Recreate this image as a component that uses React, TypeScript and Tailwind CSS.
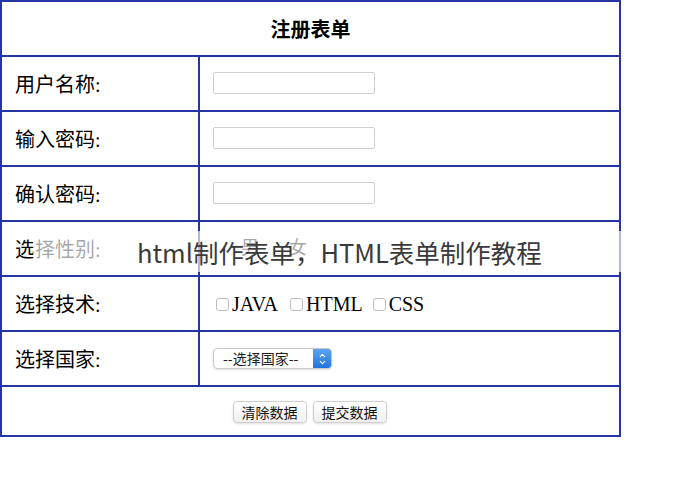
import { ChevronUp, ChevronDown } from "lucide-react";

const line = "border-[#2535a6]";
const cjk = { fontFamily: '"Liberation Serif", "Noto Sans CJK SC", serif' };

function Row({ label, children }: { label: string; children?: React.ReactNode }) {
    return (
        <div className={`flex h-[55px] border-b-2 ${line}`}>
            <div className={`w-[198px] shrink-0 border-r-2 ${line} flex items-center pl-[13px] pt-[2px] text-[20px] text-black`}>
                {label}
            </div>
            <div className="flex items-center pl-[13px]">{children}</div>
        </div>
    );
}

function TextBox() {
    return <input className="w-[162px] h-[22px] border border-[#cfcfcf] rounded-[2px] bg-white outline-none -mt-[2px]" />;
}

function Box() {
    return <span className="inline-block w-[13px] h-[13px] border border-[#bdbdbd] rounded-[3px] bg-white mr-[3px]" />;
}

export default function App() {
    return (
        <div className="w-[678px] h-[490px] bg-white relative" style={cjk}>
            <div className={`w-[621px] border-2 ${line} border-b-0`}>
                <div className={`h-[55px] border-b-2 ${line} flex items-center justify-center text-[20px] font-bold pt-[2px]`}>
                    注册表单
                </div>
                <Row label="用户名称:"><TextBox /></Row>
                <Row label="输入密码:"><TextBox /></Row>
                <Row label="确认密码:"><TextBox /></Row>
                <Row label="选择性别:">
                    <div className="flex items-center text-[18px] pl-[12px]">
                        <span className="inline-block w-[13px] h-[13px] rounded-full border border-[#bdbdbd] mr-[3px]" />男
                        <span className="inline-block w-[13px] h-[13px] rounded-full border border-[#bdbdbd] ml-[14px] mr-[3px]" />女
                    </div>
                </Row>
                <Row label="选择技术:">
                    <div className="flex items-center text-[20px] pl-[3px] pt-[1px]">
                        <Box />JAVA
                        <span className="w-[12px]" />
                        <Box />HTML
                        <span className="w-[10px]" />
                        <Box />CSS
                    </div>
                </Row>
                <Row label="选择国家:">
                    <div className="flex w-[119px] h-[21px] rounded-[4px] border border-[#c8c8c8] overflow-hidden shadow-sm">
                        <span className="flex-1 flex items-center pl-[9px] text-[14px] text-[#222]" style={{ fontFamily: '"Noto Sans CJK SC", sans-serif' }}>
                            --选择国家--
                        </span>
                        <span className="w-[18px] bg-gradient-to-b from-[#5aa4f2] to-[#1f74dc] flex flex-col items-center justify-center text-white">
                            <ChevronUp size={9} strokeWidth={3} className="-mb-[1px]" />
                            <ChevronDown size={9} strokeWidth={3} className="-mt-[1px]" />
                        </span>
                    </div>
                </Row>
                <div className={`h-[50px] border-b-2 ${line} flex items-center justify-center gap-[6px] pr-[2px] pt-[1px]`}>
                    {["清除数据", "提交数据"].map((t) => (
                        <button
                            key={t}
                            className="w-[74px] h-[22px] rounded-[4px] border border-[#cfcfcf] bg-gradient-to-b from-white to-[#f0f0f0] text-[14px] text-[#111] shadow-sm"
                            style={{ fontFamily: '"Noto Sans CJK SC", sans-serif' }}
                        >
                            {t}
                        </button>
                    ))}
                </div>
            </div>
            {/* watermark band over the gender row */}
            <div className="absolute left-[33px] top-[231px] w-[589px] h-[41px] bg-white/65 flex items-center pl-[104px]">
                <span
                    className="text-[25.5px] text-[#3a3a3a] whitespace-nowrap leading-none"
                    style={{ fontFamily: '"Noto Sans CJK SC", "Noto Sans", sans-serif' }}
                >
                    html制作表单，HTML表单制作教程
                </span>
            </div>
        </div>
    );
}
